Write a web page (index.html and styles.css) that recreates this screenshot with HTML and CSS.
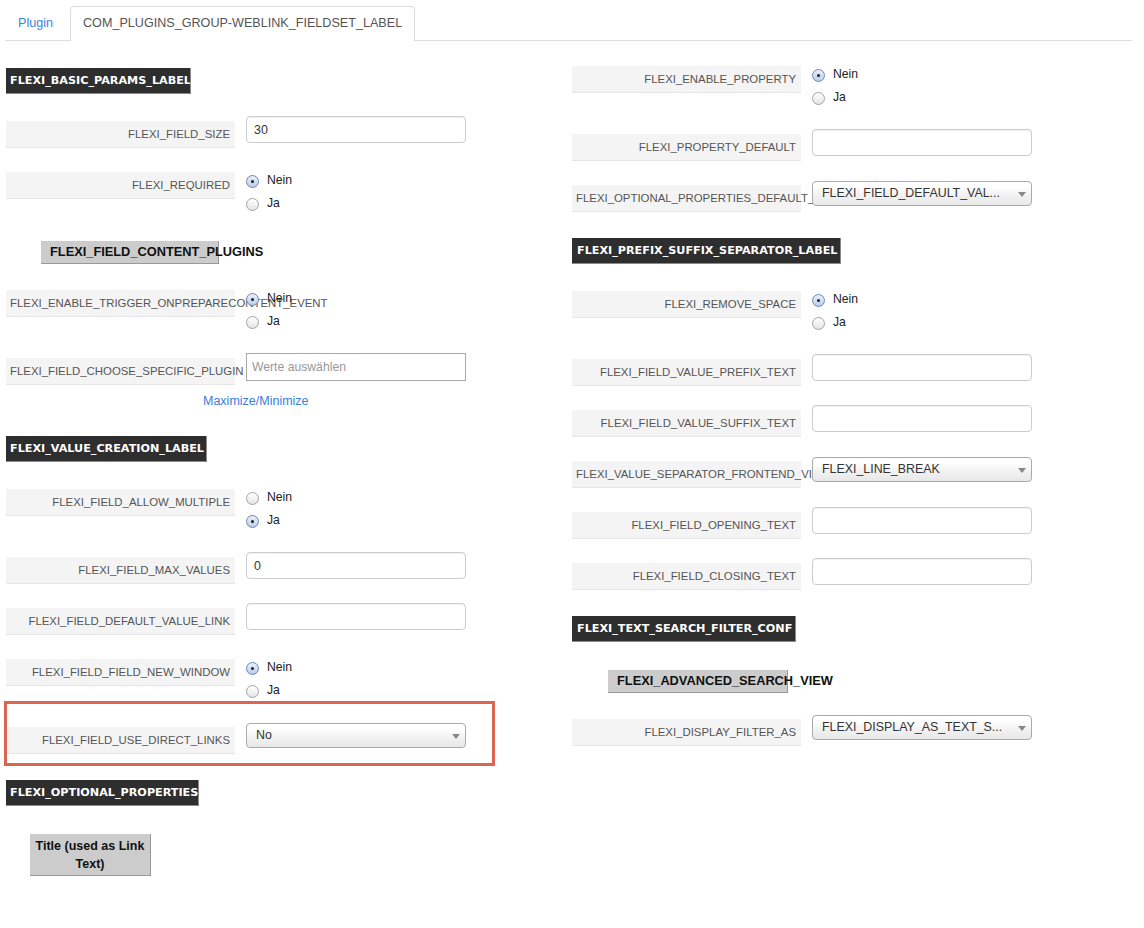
FILE: index.html
```html
<!DOCTYPE html>
<html>
<head>
<meta charset="utf-8">
<title>Plugin</title>
<link rel="stylesheet" href="styles.css">
</head>
<body>
<div class="page">
  <ul class="tabs">
    <li class="tab"><a class="tab-link" href="#">Plugin</a></li>
    <li class="tab active"><span class="tab-text">COM_PLUGINS_GROUP-WEBLINK_FIELDSET_LABEL</span></li>
  </ul>

  <div class="columns">
    <div class="col">
      <div class="section-head w-basic">FLEXI_BASIC_PARAMS_LABEL</div>

      <div class="row">
        <div class="lbl">FLEXI_FIELD_SIZE</div>
        <input class="txt" type="text" value="30">
      </div>

      <div class="row">
        <div class="lbl">FLEXI_REQUIRED</div>
        <div class="radios">
          <div class="opt"><span class="radio checked"></span>Nein</div>
          <div class="opt"><span class="radio"></span>Ja</div>
        </div>
      </div>

      <div class="sub-head sh-plugins">FLEXI_FIELD_CONTENT_PLUGINS</div>

      <div class="row">
        <div class="lbl">FLEXI_ENABLE_TRIGGER_ONPREPARECONTENT_EVENT</div>
        <div class="radios">
          <div class="opt"><span class="radio checked"></span>Nein</div>
          <div class="opt"><span class="radio"></span>Ja</div>
        </div>
      </div>

      <div class="row tight">
        <div class="lbl">FLEXI_FIELD_CHOOSE_SPECIFIC_PLUGIN</div>
        <input class="txt square" type="text" placeholder="Werte auswählen">
      </div>
      <a class="toggle" href="#">Maximize/Minimize</a>

      <div class="section-head w-value">FLEXI_VALUE_CREATION_LABEL</div>

      <div class="row">
        <div class="lbl">FLEXI_FIELD_ALLOW_MULTIPLE</div>
        <div class="radios">
          <div class="opt"><span class="radio"></span>Nein</div>
          <div class="opt"><span class="radio checked"></span>Ja</div>
        </div>
      </div>

      <div class="row">
        <div class="lbl">FLEXI_FIELD_MAX_VALUES</div>
        <input class="txt" type="text" value="0">
      </div>

      <div class="row">
        <div class="lbl">FLEXI_FIELD_DEFAULT_VALUE_LINK</div>
        <input class="txt" type="text" value="">
      </div>

      <div class="row">
        <div class="lbl">FLEXI_FIELD_FIELD_NEW_WINDOW</div>
        <div class="radios">
          <div class="opt"><span class="radio checked"></span>Nein</div>
          <div class="opt"><span class="radio"></span>Ja</div>
        </div>
      </div>

      <div class="row highlight">
        <div class="lbl">FLEXI_FIELD_USE_DIRECT_LINKS</div>
        <div class="sel">No</div>
      </div>

      <div class="section-head w-optional">FLEXI_OPTIONAL_PROPERTIES_LABEL</div>

      <div class="title-box">Title (used as Link Text)</div>
    </div>

    <div class="col">
      <div class="row">
        <div class="lbl">FLEXI_ENABLE_PROPERTY</div>
        <div class="radios">
          <div class="opt"><span class="radio checked"></span>Nein</div>
          <div class="opt"><span class="radio"></span>Ja</div>
        </div>
      </div>

      <div class="row">
        <div class="lbl">FLEXI_PROPERTY_DEFAULT</div>
        <input class="txt" type="text" value="">
      </div>

      <div class="row">
        <div class="lbl">FLEXI_OPTIONAL_PROPERTIES_DEFAULT_VALUE</div>
        <div class="sel">FLEXI_FIELD_DEFAULT_VAL...</div>
      </div>

      <div class="section-head w-prefix">FLEXI_PREFIX_SUFFIX_SEPARATOR_LABEL</div>

      <div class="row">
        <div class="lbl">FLEXI_REMOVE_SPACE</div>
        <div class="radios">
          <div class="opt"><span class="radio checked"></span>Nein</div>
          <div class="opt"><span class="radio"></span>Ja</div>
        </div>
      </div>

      <div class="row">
        <div class="lbl">FLEXI_FIELD_VALUE_PREFIX_TEXT</div>
        <input class="txt" type="text" value="">
      </div>

      <div class="row">
        <div class="lbl">FLEXI_FIELD_VALUE_SUFFIX_TEXT</div>
        <input class="txt" type="text" value="">
      </div>

      <div class="row">
        <div class="lbl">FLEXI_VALUE_SEPARATOR_FRONTEND_VIEW</div>
        <div class="sel">FLEXI_LINE_BREAK</div>
      </div>

      <div class="row">
        <div class="lbl">FLEXI_FIELD_OPENING_TEXT</div>
        <input class="txt" type="text" value="">
      </div>

      <div class="row">
        <div class="lbl">FLEXI_FIELD_CLOSING_TEXT</div>
        <input class="txt" type="text" value="">
      </div>

      <div class="section-head w-search">FLEXI_TEXT_SEARCH_FILTER_CONF</div>

      <div class="sub-head sh-search">FLEXI_ADVANCED_SEARCH_VIEW</div>

      <div class="row">
        <div class="lbl">FLEXI_DISPLAY_FILTER_AS</div>
        <div class="sel">FLEXI_DISPLAY_AS_TEXT_S...</div>
      </div>
    </div>
  </div>
</div>
</body>
</html>
```

FILE: styles.css
```css
html, body {
  margin: 0;
  padding: 0;
  background: #fff;
}

body {
  font-family: "Liberation Sans", Arial, sans-serif;
  color: #333;
}

.page {
  width: 1127px;
  margin-left: 5px;
}

/* Tabs */
.tabs {
  list-style: none;
  margin: 6px 0 0 0;
  padding: 0;
  display: flex;
  border-bottom: 1px solid #dddddd;
}

.tab {
  height: 33px;
  line-height: 32px;
  padding: 0 12px;
  border: 1px solid transparent;
  border-bottom: none;
  margin-right: 4px;
  font-size: 12.6px;
  border-radius: 4px 4px 0 0;
}

.tab.active {
  border-color: #dddddd;
  background: #fff;
  margin-bottom: -1px;
  height: 34px;
  color: #555;
}

.tab-link {
  color: #3f83d6;
  text-decoration: none;
}

/* Columns */
.columns {
  display: grid;
  grid-template-columns: 566px 566px;
  margin-left: 1px;
  padding-top: 20px;
}

.col {
  display: flex;
  flex-direction: column;
  align-items: flex-start;
}

/* Section headers */
.section-head {
  box-sizing: border-box;
  margin: 7px 0 22px 0;
  height: 26px;
  line-height: 25px;
  padding-left: 4px;
  background: #2e2e2e;
  border-right: 1px solid #8a8a8a;
  border-bottom: 1px solid #8a8a8a;
  color: #fff;
  font-family: "DejaVu Sans", Verdana, sans-serif;
  font-weight: bold;
  font-size: 11.2px;
  white-space: nowrap;
  overflow: hidden;
}

.w-basic { width: 185px; }
.w-value { width: 201px; }
.w-optional { width: 193px; }
.w-prefix { width: 269px; padding-left: 5px; }
.w-search { width: 224px; padding-left: 5px; }

.sub-head {
  box-sizing: border-box;
  margin: 6px 0 21px 0;
  height: 23px;
  line-height: 22px;
  padding-left: 9px;
  background: #cccccc;
  border-right: 1px solid #999;
  border-bottom: 1px solid #999;
  color: #111;
  font-weight: bold;
  font-size: 12.8px;
  white-space: nowrap;
}

.sh-plugins { margin-left: 35px; width: 178px; }
.sh-search { margin-left: 36px; width: 180px; }

.title-box {
  box-sizing: border-box;
  margin: 6px 0 0 24px;
  width: 121px;
  height: 42px;
  padding-top: 3px;
  background: #cccccc;
  border-right: 1px solid #999;
  border-bottom: 1px solid #999;
  color: #111;
  font-weight: bold;
  font-size: 12.5px;
  line-height: 18px;
  text-align: center;
}

/* Rows */
.row {
  display: flex;
  align-items: flex-start;
  gap: 11px;
  margin-bottom: 19px;
}

.row.tight {
  margin-bottom: 7px;
}

.row.highlight {
  position: relative;
}

.row.highlight::after {
  content: "";
  position: absolute;
  left: -2px;
  top: -21px;
  width: 491px;
  height: 65px;
  box-sizing: border-box;
  border: 3px solid #dc654f;
  pointer-events: none;
}

.lbl {
  box-sizing: border-box;
  flex: 0 0 229px;
  width: 229px;
  height: 27px;
  margin-top: 5px;
  padding: 0 5px 0 4px;
  background: #f4f4f4;
  border-bottom: 1px solid #e6e6e6;
  text-align: right;
  line-height: 26px;
  font-size: 11.4px;
  color: #555;
  white-space: nowrap;
}

.txt {
  box-sizing: border-box;
  width: 220px;
  height: 27px;
  margin: 0;
  padding: 0 7px;
  border: 1px solid #cccccc;
  border-radius: 4px;
  box-shadow: inset 0 1px 1px rgba(0, 0, 0, 0.06);
  font-family: "Liberation Sans", Arial, sans-serif;
  font-size: 12.4px;
  color: #333;
  background: #fff;
  outline: none;
}

.txt.square {
  height: 28px;
  border-radius: 0;
  border-color: #a9a9a9;
  box-shadow: none;
  padding-left: 5px;
  font-size: 12.2px;
}

.txt.square::placeholder {
  color: #999;
}

.sel {
  position: relative;
  box-sizing: border-box;
  width: 220px;
  height: 25px;
  margin-top: 1px;
  padding-left: 9px;
  border: 1px solid #aaaaaa;
  border-radius: 4px;
  background: linear-gradient(#ffffff 20%, #f1f1f1 60%, #e8e8e8);
  font-size: 12.4px;
  line-height: 22px;
  color: #333;
  white-space: nowrap;
  overflow: hidden;
}

.sel::after {
  content: "";
  position: absolute;
  right: 5px;
  top: 10px;
  border-left: 4px solid transparent;
  border-right: 4px solid transparent;
  border-top: 5px solid #888;
}

/* Radios */
.radios {
  padding-top: 1px;
  height: 49px;
  box-sizing: border-box;
}

.opt {
  display: flex;
  align-items: center;
  height: 23px;
  font-size: 12.2px;
  color: #222;
}

.radio {
  box-sizing: border-box;
  width: 13px;
  height: 13px;
  margin: 3px 8px 0 0;
  border-radius: 50%;
  border: 1px solid #a3a3a3;
  background: linear-gradient(#ffffff, #e4e4e4);
  position: relative;
}

.radio.checked {
  border-color: #6d87b3;
  background: linear-gradient(#e9f0fb, #b9cdeb);
}

.radio.checked::after {
  content: "";
  position: absolute;
  left: 4px;
  top: 4px;
  width: 3px;
  height: 3px;
  border-radius: 50%;
  background: #1d1d1d;
}

.toggle {
  margin: 0 0 19px 197px;
  line-height: 18px;
  font-size: 12.5px;
  color: #3b7dd8;
  text-decoration: none;
}
```
